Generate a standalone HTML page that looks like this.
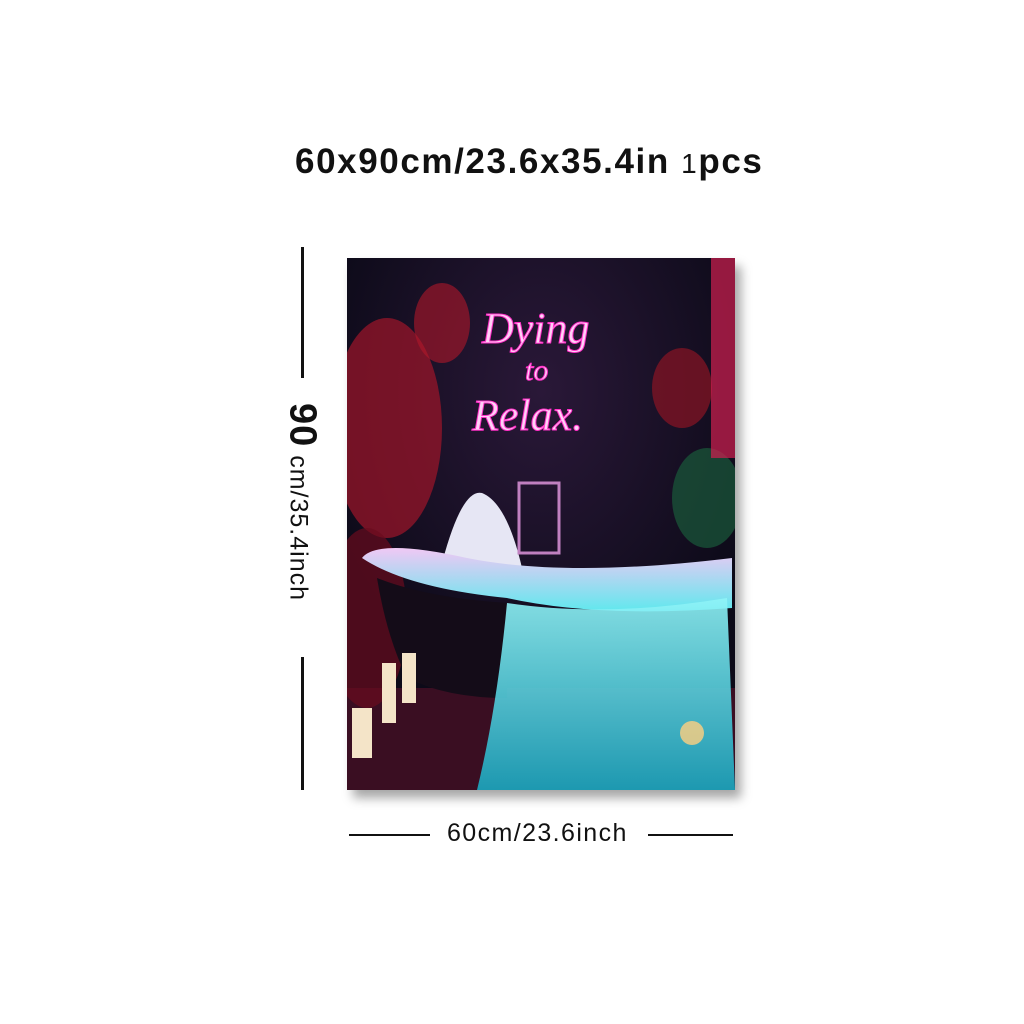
<!DOCTYPE html>
<html><head><meta charset="utf-8"><style>
body{margin:0;width:1024px;height:1024px;background:#fff;position:relative;overflow:hidden;font-family:"Liberation Sans",sans-serif}
.t{position:absolute;left:295px;top:142px;white-space:nowrap;font-size:35px;font-weight:bold;color:#111;letter-spacing:1.6px}
.ln{position:absolute;background:#111}
.art{position:absolute;left:347px;top:258px;width:388px;height:532px;overflow:hidden;background:#120c1c;box-shadow:6px 8px 10px rgba(0,0,0,.35)}
</style></head><body>
<div class="t">60x90cm/23.6x35.4in <span style="font-size:28px;font-weight:normal">1</span>pcs</div>
<div class="ln" style="left:301px;top:247px;width:3px;height:131px"></div>
<div class="ln" style="left:301px;top:657px;width:3px;height:133px"></div>
<div style="position:absolute;left:302px;top:502px;transform:translate(-50%,-50%) rotate(90deg);white-space:nowrap;font-size:25px;color:#111;letter-spacing:1px"><span style="font-size:38px;font-weight:bold">90</span> cm/35.4inch</div>
<div class="ln" style="left:349px;top:834px;width:81px;height:2px"></div>
<div class="ln" style="left:648px;top:834px;width:85px;height:2px"></div>
<div style="position:absolute;left:447px;top:819px;font-size:25px;color:#111;letter-spacing:1.4px">60cm/23.6inch</div>
<div class="art">
<svg width="388" height="532" viewBox="0 0 388 532">
<defs>
<radialGradient id="g1" cx="0.5" cy="0.25" r="0.6"><stop offset="0" stop-color="#2a1838"/><stop offset="1" stop-color="#0c0a18"/></radialGradient>
<linearGradient id="tub" x1="0" y1="0" x2="0" y2="1"><stop offset="0" stop-color="#f0c8f4"/><stop offset="1" stop-color="#60e8ee"/></linearGradient>
<linearGradient id="veil" x1="0" y1="0" x2="0" y2="1"><stop offset="0" stop-color="#90f4f8"/><stop offset="1" stop-color="#1aa8c0"/></linearGradient>
</defs>
<rect width="388" height="532" fill="url(#g1)"/>
<rect x="0" y="430" width="388" height="102" fill="#3a0e22"/>
<ellipse cx="40" cy="170" rx="55" ry="110" fill="#a0162a" opacity=".7"/>
<ellipse cx="20" cy="360" rx="40" ry="90" fill="#6a0c1e" opacity=".7"/>
<ellipse cx="95" cy="65" rx="28" ry="40" fill="#b0182a" opacity=".6"/>
<ellipse cx="335" cy="130" rx="30" ry="40" fill="#8a1424" opacity=".7"/>
<ellipse cx="360" cy="240" rx="35" ry="50" fill="#1a5a3a" opacity=".7"/>
<rect x="364" y="0" width="24" height="200" fill="#d02050" opacity=".7"/>
<text x="135" y="85" font-family="Liberation Serif,serif" font-style="italic" font-size="44" fill="#ffd0f6" stroke="#ff30c8" stroke-width="1">Dying</text>
<text x="178" y="122" font-family="Liberation Serif,serif" font-style="italic" font-size="30" fill="#ffd0f6" stroke="#ff30c8" stroke-width="1">to</text>
<text x="125" y="172" font-family="Liberation Serif,serif" font-style="italic" font-size="44" fill="#ffd0f6" stroke="#ff30c8" stroke-width="1">Relax.</text>
<path d="M95 305 Q115 230 135 235 Q160 245 175 310 Z" fill="#e6e6f4"/>
<rect x="172" y="225" width="40" height="70" fill="none" stroke="#c080c0" stroke-width="3"/>
<path d="M15 300 Q30 280 120 300 Q220 320 385 300 L385 350 Q250 360 160 340 Q60 330 15 300 Z" fill="url(#tub)"/>
<path d="M30 320 Q80 340 160 345 L160 440 Q100 440 60 420 Q40 380 30 320 Z" fill="#140c18"/>
<path d="M160 345 Q260 360 380 340 L388 532 L130 532 Q150 450 160 345 Z" fill="url(#veil)" opacity=".9"/>
<rect x="35" y="405" width="14" height="60" fill="#f4e4c8"/>
<rect x="55" y="395" width="14" height="50" fill="#f4e4c8"/>
<rect x="5" y="450" width="20" height="50" fill="#f4e4c8"/>
<circle cx="345" cy="475" r="12" fill="#ffd080" opacity=".8"/>
</svg>
</div>
</body></html>
